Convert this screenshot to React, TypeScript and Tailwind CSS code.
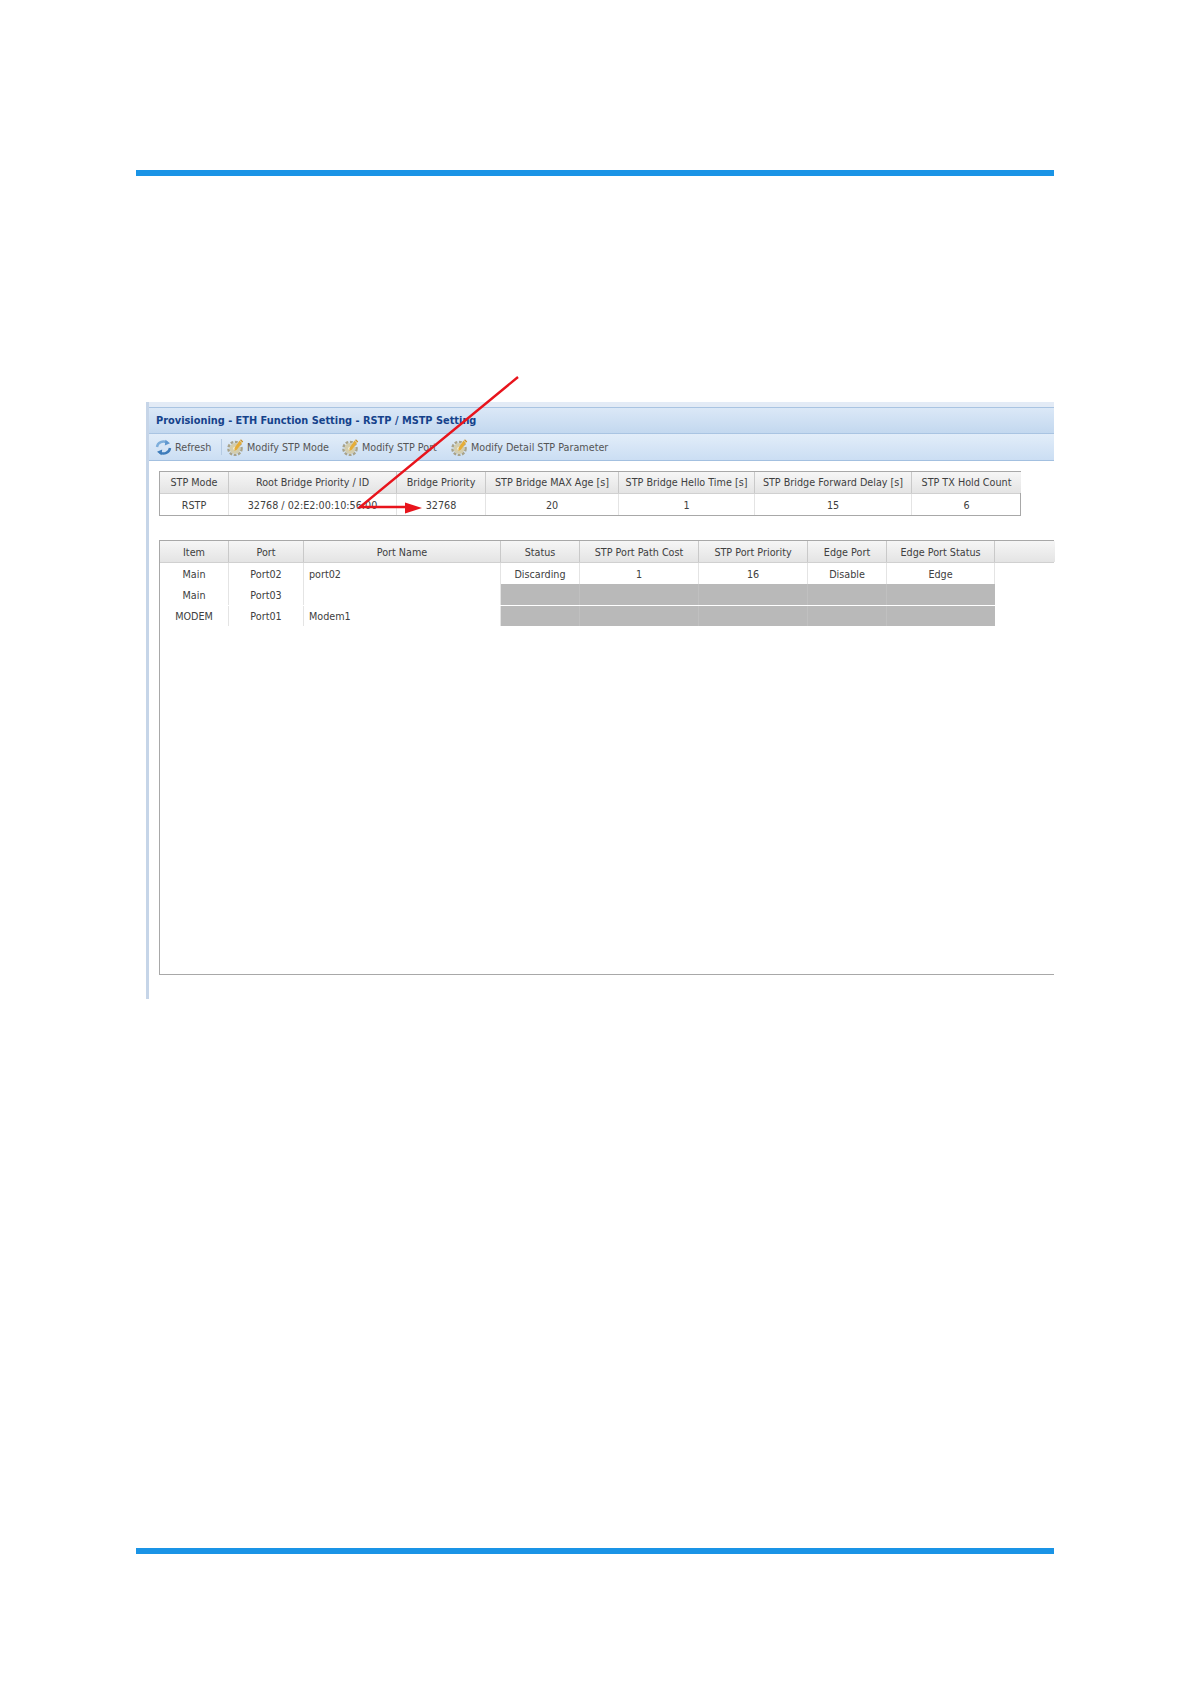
const BRIDGE_COLS = 'grid-cols-[69px_168px_89px_133px_136px_157px_109px]';
const PORT_COLS = 'grid-cols-[69px_75px_197px_79px_119px_109px_79px_108px_60px]';

const BRIDGE_HEADERS = [
  'STP Mode',
  'Root Bridge Priority / ID',
  'Bridge Priority',
  'STP Bridge MAX Age [s]',
  'STP Bridge Hello Time [s]',
  'STP Bridge Forward Delay [s]',
  'STP TX Hold Count',
];
const BRIDGE_VALUES = ['RSTP', '32768 / 02:E2:00:10:56:00', '32768', '20', '1', '15', '6'];
const PORT_HEADERS = [
  'Item',
  'Port',
  'Port Name',
  'Status',
  'STP Port Path Cost',
  'STP Port Priority',
  'Edge Port',
  'Edge Port Status',
  '',
];

function RefreshIcon() {
  return (
    <svg width="17" height="17" viewBox="0 0 17 17" fill="none" className="shrink-0">
      <path d="M2 8C2.5 3.5 8 1 12 3.5" stroke="#7eaedb" strokeWidth="2.4" />
      <path d="M10.5 0.8L15 4.2L9.8 6.4Z" fill="#5f97cf" />
      <path d="M15 9C14.5 13.5 9 16 5 13.5" stroke="#3f7dbb" strokeWidth="2.4" />
      <path d="M6.5 16.2L2 12.8L7.2 10.6Z" fill="#3f7dbb" />
    </svg>
  );
}

function GearIcon() {
  return (
    <svg width="17" height="18" viewBox="0 0 17 18" className="shrink-0">
      <circle cx="8" cy="10.5" r="6.6" fill="none" stroke="#a9a38a" strokeWidth="2.4" strokeDasharray="2.8 1.6" />
      <circle cx="8" cy="10.5" r="5.4" fill="#d3cdae" />
      <circle cx="8" cy="10.5" r="1.8" fill="#f4f0dc" />
      <path d="M12.5 2.5L15 5L10 11.5L7.5 13L7.5 10Z" fill="#e5ad38" />
      <path d="M13.5 1.8L15.8 4" stroke="#c98f24" strokeWidth="1.2" />
    </svg>
  );
}

function ToolButton({ label, icon, width }: { label: string; icon: React.ReactNode; width: string }) {
  return (
    <div className={`flex items-center gap-[3px] ${width}`}>
      {icon}
      <span className="whitespace-nowrap pt-[2px]">{label}</span>
    </div>
  );
}

function HeaderCell({ text, className }: { text: string; className?: string }) {
  return (
    <div className={`flex items-center justify-center whitespace-nowrap border-r border-[#c9c9c9] bg-gradient-to-b from-[#f6f6f6] to-[#e4e4e4] last:border-r-0 ${className ?? ''}`}>
      {text}
    </div>
  );
}

function Cell({ text, left, className }: { text?: string; left?: boolean; className?: string }) {
  return (
    <div className={`flex items-center whitespace-nowrap border-r border-[#e4e4e4] pt-[3px] ${left ? 'justify-start pl-[5px]' : 'justify-center'} ${className ?? ''}`}>
      {text}
    </div>
  );
}

function GrayCells() {
  return (
    <>
      <div className="border-r border-[#c0c0c0] bg-[#b9b9b9]" />
      <div className="border-r border-[#c0c0c0] bg-[#b9b9b9]" />
      <div className="border-r border-[#c0c0c0] bg-[#b9b9b9]" />
      <div className="border-r border-[#c0c0c0] bg-[#b9b9b9]" />
      <div className="bg-[#b9b9b9]" />
    </>
  );
}

export default function App() {
  return (
    <div
      className="relative h-[1684px] w-[1190px] overflow-hidden bg-white pl-[136px] pr-[135px] pt-[170px] text-[9.65px] text-[#404040]"
      style={{ fontFamily: '"DejaVu Sans", sans-serif' }}
    >
      <div className="mr-px h-[6px] bg-[#1a94e6]" />

      {/* screenshot window */}
      <div className="ml-[10px] mr-px mt-[226px] flex h-[597px] flex-col border-l-[3px] border-[#c6d5e8] bg-white">
        <div className="h-[5px] bg-[#e3ebf6]" />
        <div className="flex h-[27px] items-center border-y border-[#a9c4e2] bg-gradient-to-b from-[#dbe8f7] to-[#c3d8ef] pl-[7px] pt-[2px] text-[9.8px] font-bold text-[#15428b]">
          Provisioning - ETH Function Setting - RSTP / MSTP Setting
        </div>
        <div className="flex h-[27px] items-center border-b border-[#a3c0e0] bg-gradient-to-b from-[#e2edf9] to-[#cbdef3] pl-[6px] text-[#555]">
          <ToolButton label="Refresh" icon={<RefreshIcon />} width="w-[66px]" />
          <div className="mr-[5px] h-[16px] w-px bg-[#b5cbe3]" />
          <ToolButton label="Modify STP Mode" icon={<GearIcon />} width="w-[115px]" />
          <ToolButton label="Modify STP Port" icon={<GearIcon />} width="w-[109px]" />
          <ToolButton label="Modify Detail STP Parameter" icon={<GearIcon />} width="w-[170px]" />
        </div>

        <div className="flex flex-1 flex-col pb-[24px] pl-[10px] pt-[10px]">
          <div className="w-[862px] border border-[#a8a8a8]">
            <div className={`grid h-[22px] ${BRIDGE_COLS} border-b border-[#d0d0d0]`}>
              {BRIDGE_HEADERS.map((h) => (
                <HeaderCell key={h} text={h} className="pt-[2px]" />
              ))}
            </div>
            <div className={`grid h-[21px] ${BRIDGE_COLS}`}>
              {BRIDGE_VALUES.map((v, i) => (
                <Cell key={i} text={v} className="last:border-r-0" />
              ))}
            </div>
          </div>

          <div className="mt-[24px] flex flex-1 flex-col border-b border-l border-t border-[#a8a8a8]">
            <div className={`grid h-[22px] ${PORT_COLS} border-b border-[#d0d0d0]`}>
              {PORT_HEADERS.map((h, i) => (
                <HeaderCell key={i} text={h} className="pt-[3px]" />
              ))}
            </div>
            <div className={`grid h-[21px] ${PORT_COLS}`}>
              <Cell text="Main" />
              <Cell text="Port02" />
              <Cell text="port02" left />
              <Cell text="Discarding" />
              <Cell text="1" />
              <Cell text="16" />
              <Cell text="Disable" />
              <Cell text="Edge" />
            </div>
            <div className={`grid h-[21px] ${PORT_COLS}`}>
              <Cell text="Main" />
              <Cell text="Port03" />
              <Cell left />
              <GrayCells />
            </div>
            <div className={`mt-px grid h-[20px] ${PORT_COLS}`}>
              <Cell text="MODEM" />
              <Cell text="Port01" />
              <Cell text="Modem1" left className="pt-[2px]" />
              <GrayCells />
            </div>
          </div>
        </div>
      </div>

      <div className="mr-px mt-[549px] h-[6px] bg-[#1a94e6]" />

      {/* red annotation arrow over the screenshot */}
      <svg width="1190" height="1684" className="pointer-events-none absolute left-0 top-0">
        <path d="M518 377L360 507L406 507" fill="none" stroke="#e8141c" strokeWidth="2.4" />
        <path d="M405 502.5L422 508L405 513.5Z" fill="#e8141c" />
      </svg>
    </div>
  );
}
